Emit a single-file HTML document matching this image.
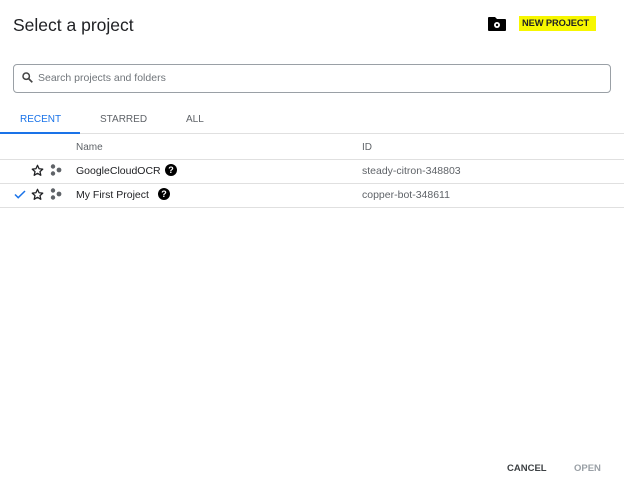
<!DOCTYPE html>
<html><head><style>
body{margin:0;width:624px;height:496px;background:#fff;font-family:"Liberation Sans",sans-serif;position:relative;overflow:hidden;color:#202124}
.a{position:absolute;white-space:nowrap}
</style></head><body>
<div class="a" style="left:13px;top:15px;font-size:17.5px;color:#202124">Select a project</div>
<svg class="a" style="left:488px;top:17px" width="18" height="14" viewBox="0 0 18 14"><path d="M1 0h6l2 2h8a1 1 0 0 1 1 1v10a1 1 0 0 1-1 1H1a1 1 0 0 1-1-1V1a1 1 0 0 1 1-1z" fill="#000"/><circle cx="9" cy="8" r="3" fill="#fff"/><circle cx="9" cy="8" r="1.2" fill="#000"/></svg>
<div class="a" style="left:519px;top:16px;width:77px;height:15px;background:#f7f700"></div>
<div class="a" style="left:522px;top:18px;font-size:9.3px;font-weight:bold;color:#202124;letter-spacing:-0.1px">NEW PROJECT</div>
<div class="a" style="left:13px;top:64px;width:596px;height:27px;border:1px solid #9aa0a6;border-radius:4px"></div>
<svg class="a" style="left:22px;top:72px" width="11" height="11" viewBox="0 0 11 11"><circle cx="4.2" cy="4.2" r="3.2" fill="none" stroke="#444" stroke-width="1.5"/><path d="M6.5 6.5l3.8 3.8" stroke="#444" stroke-width="1.7"/></svg>
<div class="a" style="left:38px;top:72px;font-size:10.5px;color:#70757a">Search projects and folders</div>
<div class="a" style="left:20px;top:114px;font-size:10px;color:#1a73e8">RECENT</div>
<div class="a" style="left:100px;top:114px;font-size:10px;color:#5f6368">STARRED</div>
<div class="a" style="left:186px;top:114px;font-size:10px;color:#5f6368">ALL</div>
<div class="a" style="left:0;top:133px;width:624px;height:1px;background:#e0e0e0"></div>
<div class="a" style="left:0;top:132px;width:80px;height:2px;background:#1a73e8"></div>
<div class="a" style="left:76px;top:142px;font-size:10px;color:#5f6368">Name</div>
<div class="a" style="left:362px;top:142px;font-size:10px;color:#5f6368">ID</div>
<div class="a" style="left:0;top:159px;width:624px;height:1px;background:#e0e0e0"></div>
<div class="a" style="left:0;top:183px;width:624px;height:1px;background:#e0e0e0"></div>
<div class="a" style="left:0;top:207px;width:624px;height:1px;background:#e0e0e0"></div>
<svg class="a" style="left:31px;top:164px" width="13" height="13" viewBox="0 0 24 24"><path d="M12 2.5l2.9 6.3 6.8.7-5.1 4.6 1.5 6.7L12 17.3l-6.1 3.5 1.5-6.7-5.1-4.6 6.8-.7z" fill="none" stroke="#202124" stroke-width="2.4" stroke-linejoin="round"/></svg>
<svg class="a" style="left:31px;top:188px" width="13" height="13" viewBox="0 0 24 24"><path d="M12 2.5l2.9 6.3 6.8.7-5.1 4.6 1.5 6.7L12 17.3l-6.1 3.5 1.5-6.7-5.1-4.6 6.8-.7z" fill="none" stroke="#202124" stroke-width="2.4" stroke-linejoin="round"/></svg>
<svg class="a" style="left:14px;top:190px" width="12" height="9" viewBox="0 0 12 9"><path d="M1 4.5l3.2 3.2L11 1" fill="none" stroke="#1a73e8" stroke-width="1.5"/></svg>
<svg class="a" style="left:50px;top:164px" width="12" height="12"><circle cx="3" cy="2.5" r="2.2" fill="#5f6368"/><circle cx="3" cy="9.5" r="2.2" fill="#5f6368"/><circle cx="9" cy="6" r="2.4" fill="#5f6368"/></svg>
<svg class="a" style="left:50px;top:188px" width="12" height="12"><circle cx="3" cy="2.5" r="2.2" fill="#5f6368"/><circle cx="3" cy="9.5" r="2.2" fill="#5f6368"/><circle cx="9" cy="6" r="2.4" fill="#5f6368"/></svg>
<div class="a" style="left:76px;top:165px;font-size:10.5px">GoogleCloudOCR</div>
<div class="a" style="left:76px;top:189px;font-size:10.5px">My First Project</div>
<div class="a" style="left:165px;top:164px;width:12px;height:12px;border-radius:50%;background:#000;color:#fff;font-size:9px;font-weight:bold;text-align:center;line-height:12px">?</div>
<div class="a" style="left:158px;top:188px;width:12px;height:12px;border-radius:50%;background:#000;color:#fff;font-size:9px;font-weight:bold;text-align:center;line-height:12px">?</div>
<div class="a" style="left:362px;top:165px;font-size:10.5px;color:#5f6368">steady-citron-348803</div>
<div class="a" style="left:362px;top:189px;font-size:10.5px;color:#5f6368">copper-bot-348611</div>
<div class="a" style="left:507px;top:463px;font-size:9.5px;font-weight:bold;color:#3c4043">CANCEL</div>
<div class="a" style="left:574px;top:463px;font-size:9.5px;font-weight:bold;color:#9aa0a6">OPEN</div>
</body></html>
